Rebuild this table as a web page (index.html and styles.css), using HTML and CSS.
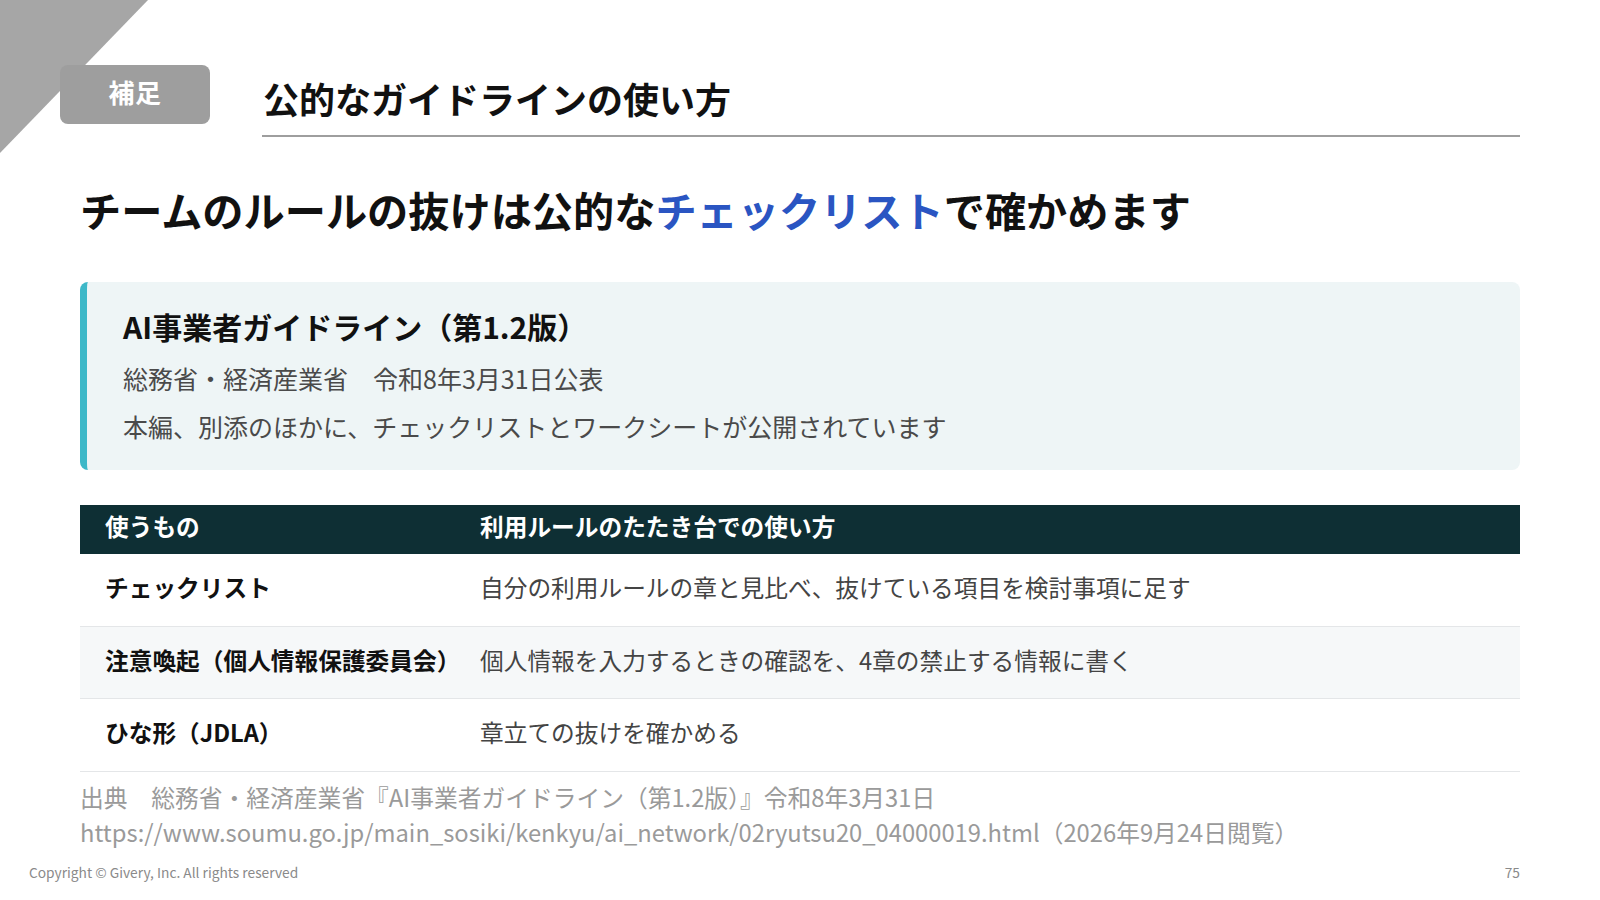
FILE: index.html
```html
<!DOCTYPE html>
<html lang="ja">
<head>
<meta charset="utf-8">
<link rel="stylesheet" href="styles.css">
</head>
<body>
<div class="slide">
  <div class="corner"></div>
  <header class="header">
    <div class="badge">補足</div>
    <h1 class="title">公的なガイドラインの使い方</h1>
  </header>
  <h2 class="lead">チームのルールの抜けは公的な<span class="accent">チェックリスト</span>で確かめます</h2>
  <section class="info">
    <div class="info-title">AI事業者ガイドライン（第1.2版）</div>
    <div class="info-line">総務省・経済産業省　令和8年3月31日公表</div>
    <div class="info-line">本編、別添のほかに、チェックリストとワークシートが公開されています</div>
  </section>
  <div class="table">
    <div class="row head">
      <div class="cell">使うもの</div>
      <div class="cell">利用ルールのたたき台での使い方</div>
    </div>
    <div class="row">
      <div class="cell name">チェックリスト</div>
      <div class="cell desc">自分の利用ルールの章と見比べ、抜けている項目を検討事項に足す</div>
    </div>
    <div class="row alt">
      <div class="cell name">注意喚起（個人情報保護委員会）</div>
      <div class="cell desc">個人情報を入力するときの確認を、4章の禁止する情報に書く</div>
    </div>
    <div class="row">
      <div class="cell name">ひな形（JDLA）</div>
      <div class="cell desc">章立ての抜けを確かめる</div>
    </div>
  </div>
  <div class="source">
    <div>出典　総務省・経済産業省『AI事業者ガイドライン（第1.2版）』令和8年3月31日</div>
    <div>https://www.soumu.go.jp/main_sosiki/kenkyu/ai_network/02ryutsu20_04000019.html（2026年9月24日閲覧）</div>
  </div>
  <footer class="footer">
    <span>Copyright © Givery, Inc. All rights reserved</span>
    <span>75</span>
  </footer>
</div>
</body>
</html>
```

FILE: styles.css
```css
* { box-sizing: border-box; }
html, body { margin: 0; padding: 0; background: #fff; }
body { font-family: "Noto Sans CJK JP", "Noto Sans", sans-serif; color: #111; }

.slide {
  position: relative;
  width: 1600px;
  height: 900px;
  overflow: hidden;
  display: flex;
  flex-direction: column;
  padding: 65px 80px 0 80px;
}

.corner {
  position: absolute;
  left: 0;
  top: 0;
  width: 148px;
  height: 153px;
  background: #a6a6a6;
  clip-path: polygon(0 0, 100% 0, 0 100%);
}

.header {
  position: relative;
  display: flex;
  align-items: flex-start;
  margin-left: -20px;
}

.badge {
  width: 150px;
  height: 59px;
  border-radius: 8px;
  background: #9e9e9e;
  color: #fff;
  font-weight: 700;
  font-size: 26px;
  display: flex;
  align-items: center;
  justify-content: center;
  padding-bottom: 6px;
  letter-spacing: 0.5px;
}

.title {
  flex: 1;
  margin: 10px 0 0 52px;
  padding: 0 0 13px 1px;
  font-size: 36px;
  line-height: 47px;
  font-weight: 700;
  border-bottom: 2px solid #9e9e9e;
  color: #111;
}

.lead {
  margin: 44px 0 0 0;
  font-size: 41.2px;
  line-height: 57px;
  font-weight: 700;
  color: #111;
}
.accent { color: #2a55c2; }

.info {
  margin-top: 44px;
  height: 188px;
  background: #eef5f6;
  border-left: 7px solid #3db8c8;
  border-radius: 8px;
  padding: 23px 0 0 36px;
}
.info-title {
  font-size: 30px;
  line-height: 42px;
  font-weight: 700;
  color: #111;
  margin-bottom: 7px;
}
.info-line {
  font-size: 25px;
  line-height: 48px;
  color: #4a4a4a;
}

.table { margin-top: 35px; }
.row {
  display: grid;
  grid-template-columns: 375px 1fr;
  height: 73px;
  align-items: center;
  border-bottom: 1px solid #e4e6e8;
  padding-bottom: 6px;
}
.row.head {
  height: 49px;
  background: #0e2f34;
  color: #fff;
  font-weight: 700;
  border-bottom: none;
  padding-bottom: 8px;
}
.row.alt { background: #f6f8f9; height: 72px; }
.cell {
  padding-left: 25px;
  font-size: 23.7px;
  line-height: 34px;
}
.cell.name { font-weight: 700; color: #111; }
.cell.desc { color: #444; }

.source {
  margin-top: 7px;
  font-size: 23.75px;
  line-height: 35px;
  color: #9a9a9a;
}

.footer {
  margin: auto -80px 0 -51px;
  padding-bottom: 18px;
  display: flex;
  justify-content: space-between;
  padding-right: 80px;
  font-size: 13.75px;
  line-height: 20px;
  color: #8a8a8a;
}
```
